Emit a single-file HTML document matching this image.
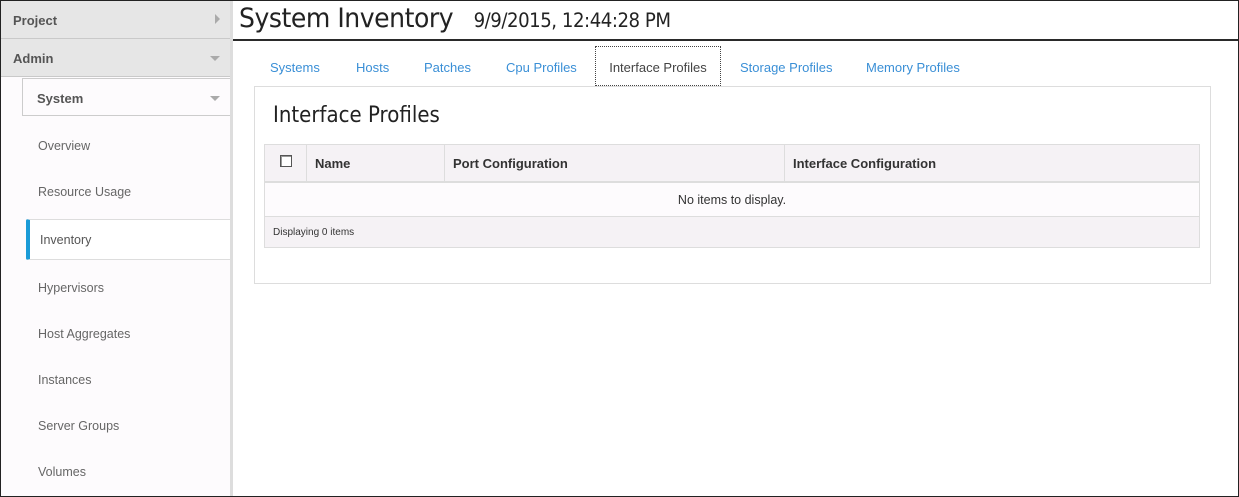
<!DOCTYPE html>
<html><head><style>
*{margin:0;padding:0;box-sizing:border-box}
body{width:1239px;height:497px;overflow:hidden;background:#fff;font-family:"Liberation Sans",sans-serif;position:relative}
.frame{position:absolute;left:0;top:0;width:1239px;height:497px;border:1px solid #222;pointer-events:none}
.side{position:absolute;left:1px;top:1px;width:229px;height:495px;background:#fdfbfd}
.sb{position:absolute;left:230px;top:1px;width:3px;height:495px;background:#ddd;z-index:3}
.hd{position:absolute;left:0;width:229px;height:38px;background:#e6e6e6;border-bottom:1px solid #c9c9c9;font-weight:bold;font-size:13px;color:#555;padding:12px 12px}
.sys{position:absolute;left:21px;top:77px;width:208px;height:38px;border:1px solid #ccc;border-right:none;font-weight:bold;font-size:13px;color:#555;padding:12px 14px;background:#fdfbfd}
.tri{position:absolute;right:10px;top:17px;width:0;height:0;border-left:5px solid transparent;border-right:5px solid transparent;border-top:5px solid #aaa}
.tr{position:absolute;right:10px;top:13px;border-top:5px solid transparent;border-bottom:5px solid transparent;border-left:5px solid #aaa}
.it{position:absolute;left:37px;font-size:12.5px;color:#666}
.act{position:absolute;left:25px;top:218px;width:204px;height:41px;background:#fff;border:1px solid #ddd;border-left:4px solid #1a9bd7;border-right:none;border-radius:2px 0 0 2px;font-size:12.5px;color:#555;padding:13px 10px}
h1{position:absolute;left:239px;top:3px;font-weight:normal;font-size:27px;color:#222;font-family:"DejaVu Sans",sans-serif;letter-spacing:-0.5px;transform:scaleX(0.93);transform-origin:left;white-space:nowrap}
h1 small{font-size:19.5px;margin-left:22px}
.rule{position:absolute;left:233px;top:39px;width:1005px;height:2px;background:#2a2a2a}
.tab{position:absolute;top:60px;font-size:13px;color:#3a8fd6}
.atab{position:absolute;left:595px;top:46px;width:126px;height:40px;border:1px dotted #444;background:#fff;font-size:13px;color:#444;text-align:center;padding-top:13px;z-index:2}
.panel{position:absolute;left:254px;top:86px;width:957px;height:198px;border:1px solid #ddd;background:#fff}
.ph{position:absolute;left:273px;top:103px;font-size:22px;color:#222;font-family:"DejaVu Sans",sans-serif;transform:scaleX(0.9);transform-origin:left}
.tbl{position:absolute;left:264px;top:144px;width:936px;height:104px;border:1px solid #ddd;background:#f5f2f5}
.th{position:absolute;top:0;height:36px;border-right:1px solid #ddd;font-weight:bold;font-size:13px;color:#333;padding:11px 8px}
.row{position:absolute;left:0;top:36px;width:934px;height:36px;background:#fdfbfd;border-top:2px solid #ddd;border-bottom:1px solid #ddd;text-align:center;font-size:12.5px;color:#333;padding-top:10px}
.cb{position:absolute;left:15px;top:10px;width:12px;height:12px;border:1px solid #555;background:#fff;box-shadow:inset 1px 1px 0 #999}
.ft{position:absolute;left:8px;top:82px;font-size:10px;color:#333}
</style></head><body>
<div class="side">
<div class="hd" style="top:0">Project<div class="tr"></div></div>
<div class="hd" style="top:38px">Admin<div class="tri"></div></div>
<div class="sys">System<div class="tri"></div></div>
<div class="it" style="top:138px">Overview</div>
<div class="it" style="top:184px">Resource Usage</div>
<div class="act">Inventory</div>
<div class="it" style="top:280px">Hypervisors</div>
<div class="it" style="top:326px">Host Aggregates</div>
<div class="it" style="top:372px">Instances</div>
<div class="it" style="top:418px">Server Groups</div>
<div class="it" style="top:464px">Volumes</div>
</div>
<div class="sb"></div>
<h1>System Inventory<small>9/9/2015, 12:44:28 PM</small></h1>
<div class="rule"></div>
<div class="tab" style="left:270px">Systems</div>
<div class="tab" style="left:356px">Hosts</div>
<div class="tab" style="left:424px">Patches</div>
<div class="tab" style="left:506px">Cpu Profiles</div>
<div class="atab">Interface Profiles</div>
<div class="tab" style="left:740px">Storage Profiles</div>
<div class="tab" style="left:866px">Memory Profiles</div>
<div class="panel"></div>
<div class="ph">Interface Profiles</div>
<div class="tbl">
<div class="th" style="left:0;width:42px"><div class="cb"></div></div>
<div class="th" style="left:42px;width:138px">Name</div>
<div class="th" style="left:180px;width:340px">Port Configuration</div>
<div class="th" style="left:520px;width:414px;border-right:none">Interface Configuration</div>
<div class="row">No items to display.</div>
<div class="ft">Displaying 0 items</div>
</div>
<div class="frame"></div>
</body></html>
